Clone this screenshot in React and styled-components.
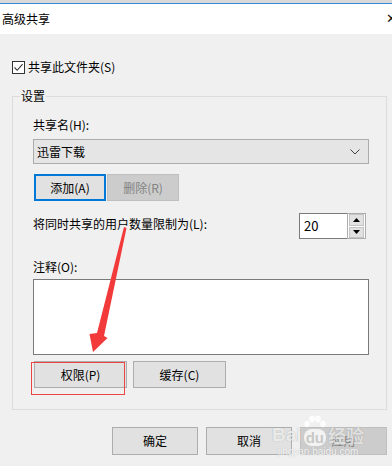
import React from 'react';
import styled, { createGlobalStyle } from 'styled-components';

const GlobalStyle = createGlobalStyle`
    html, body {
        margin: 0;
        padding: 0;
        background: #f0f0f0;
    }
`

function App() {
    return <>
        <GlobalStyle />
        <Window>
            <TopStrip />
            <TitleBar>
                <TitleText>高级共享</TitleText>
                <CloseGlyph>✕</CloseGlyph>
            </TitleBar>

            <Body>
                <CheckRow>
                    <CheckBox>
                        <svg width="11" height="11" viewBox="0 0 11 11">
                            <path d="M1.5 5.5 L4.2 8.3 L9.6 2.2" fill="none" stroke="#333" strokeWidth="1.1" />
                        </svg>
                    </CheckBox>
                    <span>共享此文件夹(S)</span>
                </CheckRow>

                <Group>
                    <Legend>设置</Legend>
                    <GroupBody>
                        <FieldLabel>共享名(H):</FieldLabel>
                        <Select>
                            <span>迅雷下载</span>
                            <svg width="10" height="6" viewBox="0 0 10 6">
                                <path d="M0.5 0.5 L5 5 L9.5 0.5" fill="none" stroke="#444" strokeWidth="1" />
                            </svg>
                        </Select>
                        <ButtonRow gap={1}>
                            <Button width={72} focused>添加(A)</Button>
                            <Button width={72} disabled>删除(R)</Button>
                        </ButtonRow>
                        <LimitRow>
                            <LimitLabel>将同时共享的用户数量限制为(L):</LimitLabel>
                            <Spin>
                                <SpinInput>20</SpinInput>
                                <SpinButtons>
                                    <SpinButton>
                                        <svg width="7" height="4" viewBox="0 0 7 4"><path d="M0 4 L3.5 0 L7 4 Z" fill="#000" /></svg>
                                    </SpinButton>
                                    <SpinButton>
                                        <svg width="7" height="4" viewBox="0 0 7 4"><path d="M0 0 L7 0 L3.5 4 Z" fill="#000" /></svg>
                                    </SpinButton>
                                </SpinButtons>
                            </Spin>
                        </LimitRow>
                        <FieldLabel top={20}>注释(O):</FieldLabel>
                        <Comment />
                        <ButtonRow gap={6} top={6}>
                            <Button width={93}>权限(P)</Button>
                            <Button width={93}>缓存(C)</Button>
                        </ButtonRow>
                    </GroupBody>
                </Group>

                <Footer>
                    <Button width={86} height={28}>确定</Button>
                    <Button width={86} height={28}>取消</Button>
                    <Button width={87} height={28} disabled>应用</Button>
                </Footer>
            </Body>

            <Arrow width="392" height="466" viewBox="0 0 392 466">
                <polygon points="124,227 126.5,228 104,336 107.5,338 93,352 89.5,334 97,333" fill="#f23a3a" />
            </Arrow>
            <RedBox />

            <Watermark>
                <WmTop>
                    <WmBai>Bai</WmBai>
                    <WmPaw>
                        <svg width="22" height="14" viewBox="0 0 22 14">
                            <ellipse cx="3" cy="9" rx="2.6" ry="3.2" fill="#fff" />
                            <ellipse cx="8" cy="4" rx="2.8" ry="3.4" fill="#fff" />
                            <ellipse cx="14" cy="4" rx="2.8" ry="3.4" fill="#fff" />
                            <ellipse cx="19" cy="9" rx="2.6" ry="3.2" fill="#fff" />
                        </svg>
                        <WmDu>du</WmDu>
                    </WmPaw>
                    <WmJing>经验</WmJing>
                </WmTop>
                <WmUrl>jingyan.baidu.com</WmUrl>
            </Watermark>
        </Window>
    </>
}

const font = `"Noto Sans CJK SC", "Microsoft YaHei", "Noto Sans", sans-serif`

const Window = styled.div`
    position: relative;
    width: 392px;
    height: 466px;
    overflow: hidden;
    background: #f0f0f0;
    font-family: ${font};
    font-size: 12px;
    line-height: 16px;
    color: #000;
`

const TopStrip = styled.div`
    height: 3px;
    background: #d9d9d9;
    border-bottom: 1px solid #3b8ad8;
`

const TitleBar = styled.div`
    height: 30px;
    background: #fff;
    display: flex;
    align-items: center;
    justify-content: space-between;
    padding-left: 2px;
`

const TitleText = styled.span`
    font-size: 12px;
    color: #000;
`

const CloseGlyph = styled.span`
    font-family: "DejaVu Sans", sans-serif;
    font-size: 13px;
    color: #111;
    margin-right: -5px;
`

const Body = styled.div`
    padding: 0 5px 0 12px;
`

const CheckRow = styled.div`
    display: flex;
    align-items: center;
    gap: 3px;
    margin-top: 25px;
`

const CheckBox = styled.div`
    width: 11px;
    height: 11px;
    border: 1px solid #333;
    background: #fff;
    display: flex;
`

const Group = styled.fieldset`
    margin: 13px 0 0 0;
    padding: 0;
    min-width: 0;
    border: 1px solid #dcdcdc;
`

const Legend = styled.legend`
    margin-left: 7px;
    padding: 0 1px;
    font-size: 12px;
    line-height: 16px;
`

const GroupBody = styled.div`
    padding: 13px 17px 21px 20px;
`

const FieldLabel = styled.div`
    margin-top: ${p => p.top || 0}px;
`

const Select = styled.div`
    margin-top: 6px;
    height: 23px;
    border: 1px solid #acacac;
    background: #e5e5e5;
    display: flex;
    align-items: center;
    justify-content: space-between;
    padding: 0 8px 0 3px;
`

const ButtonRow = styled.div`
    display: flex;
    gap: ${p => p.gap}px;
    margin-top: ${p => p.top || 10}px;
    padding-left: 1px;
`

const Button = styled.div`
    box-sizing: border-box;
    width: ${p => p.width}px;
    height: ${p => p.height || 27}px;
    display: flex;
    align-items: center;
    justify-content: center;
    background: ${p => p.disabled ? '#cccccc' : '#e1e1e1'};
    border: ${p => p.focused ? '2px solid #0078d7' : `1px solid ${p.disabled ? '#bfbfbf' : '#adadad'}`};
    color: ${p => p.disabled ? '#838383' : '#000'};
`

const LimitRow = styled.div`
    display: flex;
    justify-content: space-between;
    align-items: flex-start;
    margin-top: 12px;
    padding-right: 3px;
`

const LimitLabel = styled.span`
    padding-top: 3px;
`

const Spin = styled.div`
    display: flex;
    height: 26px;
`

const SpinInput = styled.div`
    width: 43px;
    border: 1px solid #7a7a7a;
    border-right: none;
    background: #fff;
    font-size: 13px;
    display: flex;
    align-items: center;
    padding-left: 4px;
`

const SpinButtons = styled.div`
    width: 15px;
    border: 1px solid #acacac;
    background: #fff;
    display: flex;
    flex-direction: column;
    gap: 1px;
    padding: 0 1px;
`

const SpinButton = styled.div`
    flex: 1;
    background: #e1e1e1;
    border: 1px solid #c4c4c4;
    display: flex;
    align-items: center;
    justify-content: center;
`

const Comment = styled.div`
    margin-top: 4px;
    height: 74px;
    border: 1px solid #7a7a7a;
    background: #fff;
`

const Footer = styled.div`
    display: flex;
    justify-content: flex-end;
    gap: 8px;
    margin-top: 17px;
`

const Arrow = styled.svg`
    position: absolute;
    left: 0;
    top: 0;
    pointer-events: none;
`

const RedBox = styled.div`
    position: absolute;
    left: 31px;
    top: 362px;
    width: 92px;
    height: 31px;
    border: 1px solid #e84545;
`

const Watermark = styled.div`
    position: absolute;
    left: 272px;
    top: 413px;
    width: 92px;
    display: flex;
    flex-direction: column;
    align-items: center;
    color: rgba(255, 255, 255, 0.82);
    opacity: 0.9;
`

const WmTop = styled.div`
    display: flex;
    align-items: flex-end;
    height: 33px;
`

const WmBai = styled.span`
    font-family: "Liberation Sans", Arial, sans-serif;
    font-weight: bold;
    font-size: 19px;
    line-height: 22px;
    text-shadow: 0 0 1px #9a9a9a;
`

const WmPaw = styled.div`
    display: flex;
    flex-direction: column;
    align-items: center;
    margin: 0 2px;
`

const WmDu = styled.span`
    background: rgba(255, 255, 255, 0.85);
    color: #c8c8c8;
    border-radius: 8px;
    font-family: "Liberation Sans", Arial, sans-serif;
    font-weight: bold;
    font-size: 15px;
    line-height: 17px;
    padding: 0 2px;
`

const WmJing = styled.span`
    font-size: 18px;
    line-height: 22px;
    font-weight: bold;
    color: rgba(255, 255, 255, 0.75);
    text-shadow: 0 0 1px #8a8a8a;
`

const WmUrl = styled.span`
    font-family: "Liberation Sans", Arial, sans-serif;
    font-size: 10px;
    line-height: 12px;
    color: rgba(255, 255, 255, 0.9);
    text-shadow: 0 0 1px #b0b0b0;
`

export default App;
